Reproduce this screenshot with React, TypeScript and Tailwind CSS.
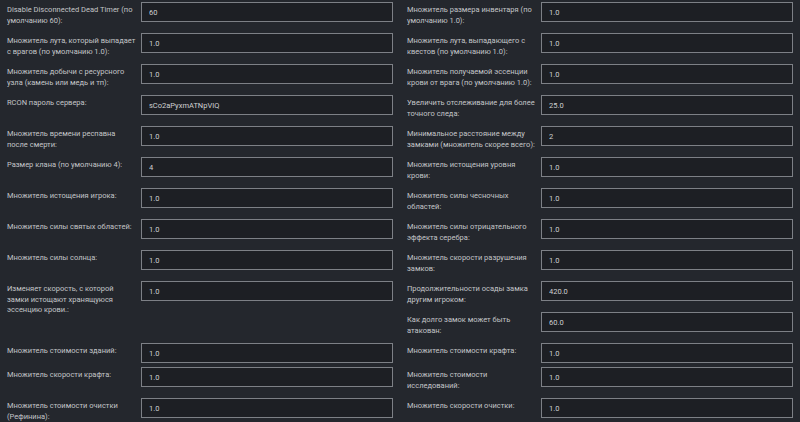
import React from "react"

type Field = {
  lines: string[]
  value: string
  tall?: boolean
}

// line breaks are kept as in the original layout
const fields: Field[] = [
  { lines: ["Disable Disconnected Dead Timer (по", "умолчанию 60):"], value: "60" },
  { lines: ["Множитель размера инвентаря (по", "умолчанию 1.0):"], value: "1.0" },
  { lines: ["Множитель лута, который выпадает", "с врагов (по умолчанию 1.0):"], value: "1.0" },
  { lines: ["Множитель лута, выпадающего с", "квестов (по умолчанию 1.0):"], value: "1.0" },
  { lines: ["Множитель добычи с ресурсного", "узла (камень или медь и тп):"], value: "1.0" },
  { lines: ["Множитель получаемой эссенции", "крови от врага (по умолчанию 1.0):"], value: "1.0" },
  { lines: ["RCON пароль сервера:"], value: "sCo2aPyxmATNpVIQ" },
  { lines: ["Увеличить отслеживание для более", "точного следа:"], value: "25.0" },
  { lines: ["Множитель времени респавна", "после смерти:"], value: "1.0" },
  { lines: ["Минимальное расстояние между", "замками (множитель скорее всего):"], value: "2" },
  { lines: ["Размер клана (по умолчанию 4):"], value: "4" },
  { lines: ["Множитель истощения уровня", "крови:"], value: "1.0" },
  { lines: ["Множитель истощения игрока:"], value: "1.0" },
  { lines: ["Множитель силы чесночных", "областей:"], value: "1.0" },
  { lines: ["Множитель силы святых областей:"], value: "1.0" },
  { lines: ["Множитель силы отрицательного", "эффекта серебра:"], value: "1.0" },
  { lines: ["Множитель силы солнца:"], value: "1.0" },
  { lines: ["Множитель скорости разрушения", "замков:"], value: "1.0" },
  {
    lines: ["Изменяет скорость, с которой", "замки истощают хранящуюся", "эссенцию крови.:"],
    value: "1.0",
    tall: true,
  },
  { lines: ["Продолжительности осады замка", "другим игроком:"], value: "420.0" },
  { lines: ["Как долго замок может быть", "атакован:"], value: "60.0" },
  { lines: ["Множитель стоимости зданий:"], value: "1.0" },
  { lines: ["Множитель стоимости крафта:"], value: "1.0" },
  { lines: ["Множитель скорости крафта:"], value: "1.0" },
  { lines: ["Множитель стоимости", "исследований:"], value: "1.0" },
  { lines: ["Множитель стоимости очистки", "(Рефинина):"], value: "1.0" },
  { lines: ["Множитель скорости очистки:"], value: "1.0" },
]

function SettingRow({ field }: { field: Field }) {
  return (
    <div className={field.tall ? "row-span-2 flex items-start px-[7px]" : "flex items-start px-[7px]"}>
      <label className="w-[134px] shrink-0 whitespace-nowrap pt-[3px] pb-[7px] text-[7.5px] leading-[10.5px] text-[#c3c5c8]">
        {field.lines.map((line) => (
          <span key={line} className="block">
            {line}
          </span>
        ))}
      </label>
      <input
        type="text"
        defaultValue={field.value}
        className="mb-[4px] h-[20px] min-w-0 flex-1 border border-[#7d8086] bg-[#1d1f24] px-[7px] text-[7.5px] text-[#cfd0d2] outline-none"
      />
    </div>
  )
}

export default function App() {
  return (
    <div
      className="h-[422px] w-[800px] overflow-hidden bg-[#24272d] pt-[2px]"
      style={{ fontFamily: "Roboto, 'Liberation Sans', sans-serif" }}
    >
      <div className="grid grid-cols-2">
        {fields.map((field) => (
          <SettingRow key={field.lines[0]} field={field} />
        ))}
      </div>
    </div>
  )
}
